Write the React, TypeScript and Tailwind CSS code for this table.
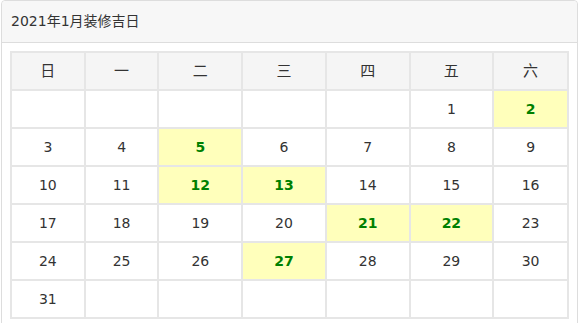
const WEEKDAYS = ['日', '一', '二', '三', '四', '五', '六']

// column widths of the month grid, first to last
const COL_WIDTHS = ['w-[74px]', 'w-[74px]', 'w-[84px]', 'w-[84px]', 'w-[84px]', 'w-[84px]', 'w-[75px]']

const LUCKY_DAYS = [2, 5, 12, 13, 21, 22, 27]

// January 2021 starts on a Friday
function buildWeeks(year: number, month: number) {
  const first = new Date(year, month - 1, 1).getDay()
  const days = new Date(year, month, 0).getDate()
  const cells: (number | null)[] = []
  for (let i = 0; i < first; i++) cells.push(null)
  for (let d = 1; d <= days; d++) cells.push(d)
  while (cells.length % 7) cells.push(null)
  const weeks: (number | null)[][] = []
  for (let i = 0; i < cells.length; i += 7) weeks.push(cells.slice(i, i + 7))
  return weeks
}

export default function App() {
  const weeks = buildWeeks(2021, 1)

  return (
    <div className="w-[581px] h-[323px] bg-white overflow-hidden pl-px">
      <div
        className="w-[577px] border border-[#dddddd] rounded-[4px] text-[#333333] text-[14px]"
        style={{ fontFamily: '"DejaVu Sans", "Noto Sans CJK SC", sans-serif' }}
      >
        <div className="h-[42px] bg-[#f7f7f7] border-b border-[#dddddd] rounded-t-[4px] flex items-center pl-[9px] text-[14px]">
          2021年1月装修吉日
        </div>
        <div className="p-2">
          <table className="border-collapse">
            <thead>
              <tr>
                {WEEKDAYS.map((w, i) => (
                  <th
                    key={w}
                    className={`${COL_WIDTHS[i]} h-[38px] border-2 border-[#e6e6e6] bg-[#f5f5f5] font-normal text-center text-[15px]`}
                  >
                    {w}
                  </th>
                ))}
              </tr>
            </thead>
            <tbody>
              {weeks.map((week, wi) => (
                <tr key={wi}>
                  {week.map((d, di) => {
                    const lucky = d !== null && LUCKY_DAYS.includes(d)
                    return (
                      <td
                        key={di}
                        className={
                          lucky
                            ? 'h-[38px] border-2 border-[#e6e6e6] bg-[#ffffbb] text-center font-bold text-[#008000] text-[14px]'
                            : 'h-[38px] border-2 border-[#e6e6e6] text-center'
                        }
                      >
                        {d ?? ''}
                      </td>
                    )
                  })}
                </tr>
              ))}
            </tbody>
          </table>
        </div>
      </div>
    </div>
  )
}
